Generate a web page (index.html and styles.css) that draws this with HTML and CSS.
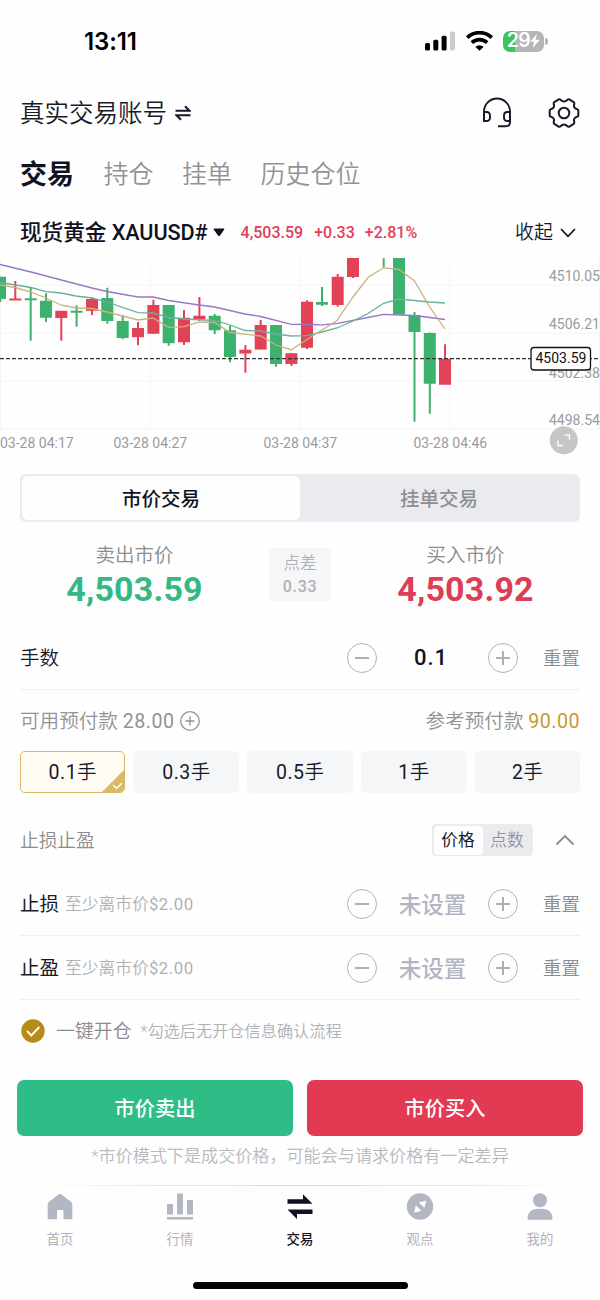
FILE: index.html
```
<!DOCTYPE html>
<html lang="zh-CN">
<head>
<meta charset="utf-8">
<title>交易</title>
<link rel="stylesheet" href="styles.css">
</head>
<body>
<header class="status">
  <span class="time">13:11</span>
  <div class="status-icons">
    <svg width="30" height="20" viewBox="0 0 30 20"><rect x="0" y="12" width="5" height="7.5" rx="1.5"/><rect x="8.3" y="8.7" width="5" height="10.8" rx="1.5"/><rect x="16.6" y="4.7" width="5" height="14.8" rx="1.5"/><rect x="25" y="0.5" width="5" height="19" rx="1.5" fill="#ccc"/></svg>
    <svg class="wifi" width="27" height="20" viewBox="0 0 27 20" fill="none" stroke="#000" stroke-width="3.7"><path d="M1.300 6.600a17.500 17.500 0 0 1 24.400 0"/><path d="M5.800 11.700a11.300 11.300 0 0 1 15.400 0"/><path d="M9.300 15.700a6.400 6.400 0 0 1 8.400 0L13.500 19.700z" fill="#000" stroke="none"/></svg>
    <div class="battery"><span>29</span><svg width="10" height="14" viewBox="0 0 10 14"><path d="M6.800 0L0.300 7.800h3.700L2.800 14L9.700 5.800H5.700z" fill="#fff"/></svg></div>
    <i class="battery-tip"></i>
  </div>
</header>

<div class="account">
  <span class="account-name">真实交易账号</span>
  <svg class="swap" width="16" height="16" viewBox="0 0 16 16" fill="none" stroke="#171a28" stroke-width="2.100"><path d="M0.500 5.800H14.500L10 1.300"/><path d="M15.500 10.200H1.500L6 14.700"/></svg>
  <svg class="headset" width="30" height="32" viewBox="0 0 30 32" fill="none" stroke="#171a28" stroke-width="1.900"><path d="M2 24V14.500a13 13 0 0 1 26 0V25q0 4.300-4.300 4.300H16"/><path d="M2 15h2.500q3.500 0 3.500 3.500v2q0 3.500-3.500 3.500H2zM28 15h-2.500q-3.500 0-3.500 3.500v2q0 3.500 3.500 3.500H28z"/></svg>
  <svg width="32" height="32" viewBox="0 0 32 32" fill="none" stroke="#171a28" stroke-width="2" stroke-linejoin="round"><path d="M30.300 13.500V18.500Q30.300 19.600 29.200 19.800Q24.800 20.900 26.300 25.100Q26.600 26.300 25.700 26.900L21.300 29.600Q20.300 30.100 19.500 29.300Q16 25.600 12.500 29.300Q11.700 30.100 10.700 29.600L6.300 26.900Q5.400 26.300 5.700 25.100Q7.200 20.900 2.800 19.800Q1.700 19.600 1.700 18.500V13.500Q1.700 12.400 2.800 12.200Q7.200 11.100 5.700 6.900Q5.400 5.700 6.300 5.100L10.700 2.400Q11.700 1.900 12.500 2.700Q16 6.400 19.500 2.700Q20.300 1.900 21.300 2.400L25.700 5.100Q26.600 5.700 26.300 6.900Q24.800 11.100 29.200 12.200Q30.300 12.400 30.300 13.500z"/><circle cx="16" cy="16" r="5.300"/></svg>
</div>

<nav class="tabs"><span class="on">交易</span><span>持仓</span><span>挂单</span><span>历史仓位</span></nav>

<div class="symbol">
  <span class="symbol-name">现货黄金 XAUUSD#</span>
  <svg class="caret" width="12" height="9" viewBox="0 0 12 9"><path d="M1.500 0.500h9q1.500 0 .6 1.200L7 7.500q-1 1-2 0L.9 1.700Q0 .5 1.500.5z" fill="#10131f"/></svg>
  <span class="quote q1">4,503.59</span><span class="quote q2">+0.33</span><span class="quote">+2.81%</span>
  <span class="fold">收起</span>
  <svg width="16" height="10" viewBox="0 0 16 10" fill="none" stroke="#10131f" stroke-width="1.700"><path d="M1 1L8 8.300L15 1"/></svg>
</div>

<div class="chart">
<svg width="600" height="198" viewBox="0 258 600 198">
  <path d="M0 285H600M0 333H600M0 381H600M0 429H600M.5 260V430M150 260V430M300 260V430M450 260V430M599.500 260V430" stroke="#f5f5f6" fill="none"/>
  <g class="axis"><text x="549" y="281">4510.05</text><text x="549" y="329">4506.21</text><text x="549" y="377.500">4502.38</text><text x="549" y="425">4498.54</text>
  <text x="0" y="447.500">03-28 04:17</text><text x="113.500" y="447.500">03-28 04:27</text><text x="263.500" y="447.500">03-28 04:37</text><text x="413.500" y="447.500">03-28 04:46</text></g>
  <g class="up">
    <path class="wick" d="M15.300 281V300M61.300 318V340.700M92 297.300V315M138 322V345.300M153.400 299.700V333.700M184 310V345M199.400 297V320.700M245.400 345V372.700M260.700 320V349.500M291.400 353V366M307 300.300V349M337.700 274V306.700M353 258V278M445 344.300V384"/>
    <path d="M9.300 298.500h12v2h-12zM55.300 310.700h12v7.300h-12zM86 299h12v11.700h-12zM132 328h12v9.300h-12zM147.400 305h12v28.700h-12zM178 317.700h12v24.600h-12zM193.400 315.700h12v3.300h-12zM239.400 349.700h12v3.800h-12zM254.700 325h12v24.500h-12zM285.400 353.300h12v10.700h-12zM301 301.700h12v46h-12zM331.700 276.700h12v28.300h-12zM347 258h12v19h-12zM439 358.700h12v26h-12z"/>
  </g>
  <g class="down">
    <path class="wick" d="M.3 277V302M30.700 287V340.700M46 293.300V322M76.600 305.300V326.700M107.300 287.700V323.700M122.700 315V339.300M168.700 305V345.700M214.700 314V334M230 325.700V362.300M276 325V366.700M322 287V306M383.700 258V267.500M414.500 312V421.700M429.800 332.500V413.700"/>
    <path d="M-6 276.700h12v22.300h-12zM24.700 298.300h12v2h-12zM40 300.700h12v17h-12zM70.600 310.700h12v2h-12zM101.300 298h12v23h-12zM116.700 321h12v17h-12zM162.700 305h12v38.300h-12zM208.700 315.700h12v14.600h-12zM224 330.300h12v26.700h-12zM270 325h12v39h-12zM316 302h12v2.700h-12zM393 258h12v56.500h-12zM408.500 315h12v17h-12zM423.800 333h12v50.700h-12z"/>
  </g>
  <g fill="none" stroke-width="1.300">
    <polyline stroke="#9a76c8" points="0,264.500 31,272 61.300,280 92,288 107,291.500 138,297 153,297 168.700,300.500 199,305 214.700,307 245,314 260.700,316.500 291.400,324.300 307,324.500 322,324.800 337.700,323.300 368,317.500 383.700,314.300 399,315 414.500,315.500 445,319.500"/>
    <polyline stroke="#67b19d" points="0,282.500 31,287.500 46,291.700 61,293 76,296 92,298 107,302 138,312.700 153,313 168.700,317.500 184,319 214.700,320.500 230,325 245,330.500 260.700,331 276,334 291,336 307,335.700 322,332 337,328 353,321 368,313.500 383.700,303.300 399,299 414.500,300.500 429,302 445,303"/>
    <polyline stroke="#c9b27c" points="0,285 15,287.500 31,292 46,298 61,305 76,308 92,308.500 107,312 138,320 153,318 168.700,327.300 184,326.700 199,322 214.700,322.500 230,332.500 260.700,336 276,345 291.400,349.700 307,339.500 337,320.500 353,297 368.500,277 383.700,267.800 399,269.500 414.500,281 429,306 445,329"/>
  </g>
  <path d="M0 358.700H600" stroke="#333" stroke-width="1.200" stroke-dasharray="4 2"/>
  <rect x="531" y="347.500" width="59.500" height="22.500" rx="3" fill="#fff" stroke="#111" stroke-width="1.300"/>
  <text class="now" x="535.500" y="363.300">4503.59</text>
  <circle cx="563.800" cy="440.300" r="14" fill="#c6c6c6"/>
  <path d="M564.500 434.800h5v5M563 445.500H558v-5" fill="none" stroke="#fff" stroke-width="1.300"/>
</svg>
</div>

<div class="segment"><span class="on">市价交易</span><span>挂单交易</span></div>

<div class="prices">
  <div class="side sell"><span>卖出市价</span><b>4,503.59</b></div>
  <div class="spread"><span>点差</span><b>0.33</b></div>
  <div class="side buy"><span>买入市价</span><b>4,503.92</b></div>
</div>

<div class="row lots">
  <span class="label">手数</span>
  <div class="stepper"><i class="minus"></i><b>0.1</b><i class="plus"></i></div><span class="reset">重置</span>
</div>

<div class="margin">
  <span>可用预付款 <em>28.00</em></span>
  <svg width="20" height="20" viewBox="0 0 20 20" fill="none" stroke="#929297" stroke-width="1.300"><circle cx="10" cy="10" r="9.300"/><path d="M5.500 10h9M10 5.500v9"/></svg>
  <span class="required">参考预付款 <em>90.00</em></span>
</div>

<div class="chips">
  <span class="on"><em>0.1</em>手<svg width="24" height="24" viewBox="0 0 24 24"><path d="M0 24L24 0V24z" fill="#d9b965"/><path d="M12 16l3.500 3.300 5.500-5" fill="none" stroke="#fff" stroke-width="1.400"/></svg></span>
  <span><em>0.3</em>手</span><span><em>0.5</em>手</span><span><em>1</em>手</span><span><em>2</em>手</span>
</div>

<div class="stops">
  <span class="stops-title">止损止盈</span>
  <div class="mode"><span class="on">价格</span><span>点数</span></div>
  <svg width="20" height="12" viewBox="0 0 20 12" fill="none" stroke="#8b8b90" stroke-width="1.800"><path d="M1.500 10.500L10 2L18.500 10.500"/></svg>
</div>

<div class="row stop">
  <span class="label">止损</span><small>至少离市价<em>$2.00</em></small>
  <div class="stepper unset"><i class="minus"></i><b>未设置</b><i class="plus"></i></div><span class="reset">重置</span>
</div>
<div class="row stop">
  <span class="label">止盈</span><small>至少离市价<em>$2.00</em></small>
  <div class="stepper unset"><i class="minus"></i><b>未设置</b><i class="plus"></i></div><span class="reset">重置</span>
</div>

<div class="quick">
  <svg width="24" height="24" viewBox="0 0 24 24"><circle cx="12" cy="12" r="11.700" fill="#b88b18"/><path d="M6 12l4.300 4.500L18.300 8" fill="none" stroke="#fff" stroke-width="1.900"/></svg>
  <span>一键开仓</span><small>*勾选后无开仓信息确认流程</small>
</div>

<div class="actions"><button class="btn-sell">市价卖出</button><button class="btn-buy">市价买入</button></div>
<p class="note">*市价模式下是成交价格，可能会与请求价格有一定差异</p>

<nav class="tabbar">
  <a><svg width="28" height="28" viewBox="0 0 28 28" fill="#b3b6c3"><path d="M14 1Q14.700 1 15.500 1.600L25 8.700Q26.300 9.700 26.300 11V26.300H17.500V18.300Q17.500 17 16.200 17H12.300Q11 17 11 18.300V26.300H1.700V11Q1.700 9.700 3 8.700L12.500 1.600Q13.300 1 14 1z"/></svg><span>首页</span></a>
  <a><svg width="28" height="28" viewBox="0 0 28 28" fill="#b3b6c3"><path d="M1 11h6v10.500H1zM11 .500h6v21h-6zM21 7h6v14.500h-6zM1 24h26v2.500H1z"/></svg><span>行情</span></a>
  <a class="on"><svg width="28" height="28" viewBox="0 0 28 28" fill="#111322"><path d="M1.500 6.300H17V1.300L26.500 10.800H1.500zM26.500 20.900H11V25.900L1.500 16.400H26.500z"/></svg><span>交易</span></a>
  <a><svg width="28" height="28" viewBox="0 0 28 28"><circle cx="14" cy="13.500" r="13.200" fill="#b3b6c3"/><path d="M20.300 7.500L18.300 14.800L12.800 9.500zM8 19.800L9.800 12.200L15.300 17.700z" fill="#fff"/></svg><span>观点</span></a>
  <a><svg width="28" height="28" viewBox="0 0 28 28" fill="#b3b6c3"><circle cx="14" cy="7.300" r="7"/><path d="M1.500 26.700Q1.500 15.700 12.500 15.700h3Q26.500 15.700 26.500 26.700z"/></svg><span>我的</span></a>
</nav>
<div class="home"></div>
</body>
</html>
```
FILE: styles.css
```
* { box-sizing: border-box; }
body {
  margin: 0;
  width: 600px;
  height: 1300px;
  overflow: hidden;
  background: #fefefe;
  color: #171a28;
  font-family: Roboto, "Noto Sans CJK SC", sans-serif;
  font-weight: 350;
  line-height: 1;
  display: flex;
  flex-direction: column;
}
body > * { flex: none; white-space: nowrap; }
svg { display: block; flex: none; }
b { font-weight: 500; }
em { font-style: normal; font-weight: 400; letter-spacing: 0.5px; }

.status { height: 82px; padding: 0 52px 0 84px; display: flex; align-items: center; justify-content: space-between; }
.time { padding-top: 1px; font: 600 24px/1 Inter, sans-serif; color: #000; letter-spacing: -0.1px; }
.status-icons { display: flex; align-items: center; }
.wifi { margin: 0 10px 0 11px; }
.battery {
  width: 41px; height: 21px; border-radius: 7px;
  background: linear-gradient(90deg, #3fc25d 12px, #b6b6b6 12px);
  display: flex; align-items: center; justify-content: center; gap: 0;
  color: #fff; font: 600 19.5px/1 Inter, sans-serif; letter-spacing: -0.5px;
}
.battery-tip { width: 3px; height: 7px; margin-left: 1px; border-radius: 0 3px 3px 0; background: #b6b6b6; }

.account { height: 62px; padding: 0 20px; display: flex; align-items: center; }
.account-name { padding-top: 3px; font-size: 24.5px; }
.swap { margin-left: 8px; }
.headset { margin: 0 36px 0 auto; }

.tabs { height: 58px; padding: 2px 20px 0; display: flex; align-items: center; font-size: 25px; color: #929297; }
.tabs span + span { margin-left: 28.5px; }
.tabs .on { padding-top: 3px; margin-right: 1px; font-size: 27px; font-weight: 700; color: #10131f; }

.symbol { height: 56px; padding: 5px 24px 0 20px; display: flex; align-items: center; }
.symbol-name { padding-top: 1px; font-size: 21.7px; font-weight: 500; letter-spacing: -0.1px; color: #10131f; }
.caret { margin: 0 16px 0 5px; }
.quote { padding-top: 1px; font-size: 16px; font-weight: 500; color: #e0405a; }
.q1 { margin-right: 11px; }
.q2 { margin-right: 10px; }
.fold { margin: 0 7px 0 auto; font-size: 19px; }

.chart { height: 198px; }
.axis { font: 400 14px Roboto, sans-serif; fill: #9b9b9f; }
.now { font: 400 14px Roboto, sans-serif; fill: #111; }
.up { fill: #e34256; stroke: #e34256; stroke-width: 0; }
.down { fill: #3db26f; stroke: #3db26f; stroke-width: 0; }
.wick { stroke-width: 2px; }

.segment { margin: 18px 20px 0; height: 48px; padding: 2px; border-radius: 6px; background: #eaebef; display: flex; font-size: 19.5px; font-weight: 500; color: #8e8f96; }
.segment span { flex: 1; padding-top: 3px; display: flex; align-items: center; justify-content: center; border-radius: 6px; }
.segment .on { background: #fefefe; color: #10131f; }

.prices { height: 104px; padding: 0 20px; display: flex; align-items: flex-start; justify-content: space-between; }
.side { width: 229px; padding-top: 24px; display: flex; flex-direction: column; align-items: center; gap: 6px; }
.side span { font-size: 19.5px; color: #8b8b90; }
.side b { font-size: 34px; font-weight: 700; letter-spacing: 0.15px; }
.sell b { color: #35b886; }
.buy b { color: #dd3e55; }
.spread { width: 62px; height: 53px; margin-top: 26px; padding-top: 2px; border-radius: 5px; background: #f5f6f8; color: #b0b1b6; display: flex; flex-direction: column; align-items: center; justify-content: center; gap: 7px; }
.spread span { font-size: 16.5px; }
.spread b { font-size: 16px; letter-spacing: 0.7px; }

.row { margin: 0 20px; height: 64px; border-bottom: 1px solid #f0f0f2; display: flex; align-items: center; }
.label { padding-top: 2px; font-size: 19.5px; }
.stop .label { font-weight: 400; }
.row small { margin-left: 6px; padding-top: 2px; font-size: 16.8px; color: #b0b1b6; }
.stepper { width: 171px; margin: 0 1px 0 auto; display: flex; align-items: center; justify-content: space-between; }
.stepper b { margin-right: 3px; font-size: 22px; letter-spacing: 1px; color: #10131f; }
.unset b { margin-right: 0; padding-top: 3px; font-size: 22.5px; letter-spacing: 0; color: #b3b5c3; }
.stepper i { width: 30px; height: 30px; border: 1.3px solid #b3b3b7; border-radius: 50%; background: linear-gradient(#aeaeb3, #aeaeb3) center / 14px 2px no-repeat; }
.stepper .plus { background: linear-gradient(#aeaeb3, #aeaeb3) center / 14px 2px no-repeat, linear-gradient(#aeaeb3, #aeaeb3) center / 2px 14px no-repeat; }
.reset { width: 61px; padding-top: 3px; text-align: right; font-size: 18.7px; color: #8b8b90; }

.margin { height: 61px; padding: 1px 20px 0; display: flex; align-items: center; font-size: 19.6px; color: #929297; }
.margin span { padding-top: 1px; }
.margin svg { margin-left: 6px; }
.required { margin-left: auto; }
.required em { color: #c59b30; }

.chips { height: 42px; padding: 0 20px; display: grid; grid-template-columns: repeat(5, 1fr); gap: 8.5px; font-size: 19.5px; }
.chips span { position: relative; padding-top: 1px; border: 1px solid #f5f6f8; border-radius: 5px; background: #f5f6f8; display: flex; align-items: center; justify-content: center; overflow: hidden; }
.chips .on { border: 1.5px solid #d9b965; background: #fffdf3; }
.chips svg { position: absolute; right: -1px; bottom: -1px; }

.stops { height: 79px; padding: 15px 25px 0 20px; display: flex; align-items: center; }
.stops-title { padding-top: 3px; font-size: 18.7px; color: #8b8b90; }
.mode { width: 101px; height: 32px; margin: 0 22px 0 auto; padding: 1.5px; border-radius: 4px; background: #eaebef; display: flex; font-size: 16.7px; color: #929297; }
.mode span { flex: 1; padding-top: 2px; display: flex; align-items: center; justify-content: center; border-radius: 4px; }
.mode .on { background: #fefefe; color: #171a28; font-weight: 400; }

.quick { height: 80px; padding: 0 21px 18px; display: flex; align-items: center; }
.quick span { margin: 0 9px 0 11px; padding-top: 2px; font-size: 18.9px; color: #8b8b90; }
.quick small { padding-top: 3px; font-size: 16.2px; color: #b0b1b6; }

.actions { height: 56px; padding: 0 17px; display: flex; gap: 14px; }
.actions button { flex: 1; border: 0; border-radius: 7px; padding: 3px 0 0; color: #fff; font: 500 20.2px/1 Roboto, "Noto Sans CJK SC", sans-serif; }
.btn-sell { background: #2fbd87; }
.btn-buy { background: #e23a53; }
.note { margin: 0; height: 49px; padding-top: 12px; text-align: center; font-size: 17.1px; color: #b8b9bf; }

.tabbar { height: 77px; display: grid; grid-template-columns: repeat(5, 1fr); border-top: 1px solid; border-image: linear-gradient(90deg, transparent 5%, #e4e4e8 30%, #dedee2 50%, #e4e4e8 75%, transparent 95%) 1; }
.tabbar a { padding-top: 7px; display: flex; flex-direction: column; align-items: center; gap: 12px; font-size: 13.4px; font-weight: 400; color: #b0b2be; }
.tabbar .on { color: #111322; font-weight: 500; }
.home { width: 215px; height: 7px; margin: 20px auto 0; border-radius: 4px; background: #000; }
```
